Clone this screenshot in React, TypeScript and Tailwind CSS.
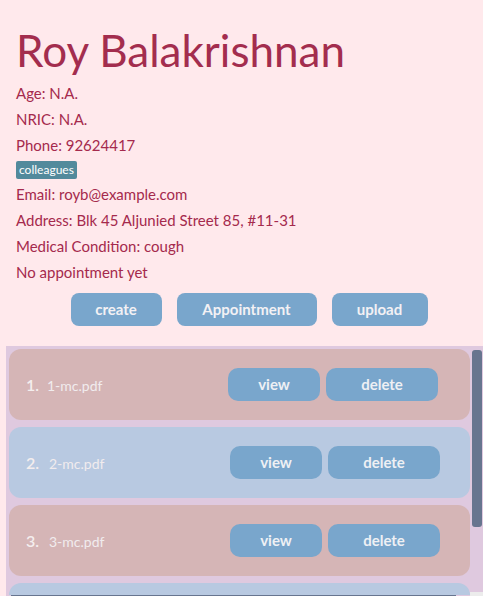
import React from "react";

const files = ["1-mc.pdf", "2-mc.pdf", "3-mc.pdf"];

export default function App() {
  const font = { fontFamily: "Lato, 'Noto Sans', sans-serif" };
  return (
    <div className="w-[483px] h-[596px] overflow-hidden bg-[#ffe9ec] text-[#a52a4d]" style={font}>
      <div className="pl-4 pt-[20px]">
        <h1 className="text-[44px] leading-[60px] font-normal text-[#a32d4e]">Roy Balakrishnan</h1>
        <div className="text-[15px] leading-[26px]">
          <div>Age: N.A.</div>
          <div>NRIC: N.A.</div>
          <div>Phone: 92624417</div>
          <div className="h-[23px] flex items-center">
            <span className="bg-[#528a9c] text-white text-[12px] leading-[18px] px-[3px] rounded-[2px]">colleagues</span>
          </div>
          <div>Email: royb@example.com</div>
          <div>Address: Blk 45 Aljunied Street 85, #11-31</div>
          <div>Medical Condition: cough</div>
          <div>No appointment yet</div>
        </div>
      </div>
      <div className="flex justify-center pl-[15px] gap-[15px] mt-[8px]">
        <button className="w-[91px] h-[33px] rounded-[8px] bg-[#79a6cc] text-[#f3f1f4] font-bold text-[15px]">create</button>
        <button className="w-[140px] h-[33px] rounded-[8px] bg-[#79a6cc] text-[#f3f1f4] font-bold text-[15px]">Appointment</button>
        <button className="w-[96px] h-[33px] rounded-[8px] bg-[#79a6cc] text-[#f3f1f4] font-bold text-[15px]">upload</button>
      </div>
      <div className="mt-[20px] ml-[6px] h-[250px] bg-[#dfc9df] flex">
        <div className="flex-1 flex flex-col">
          <div className="flex-1 flex flex-col gap-[7px] pt-[3px] pl-[3px] overflow-hidden">
            {files.map((f, i) => (
              <div
                key={f}
                className={`shrink-0 h-[71px] rounded-[12px] flex items-center pl-[17px] ${i % 2 === 0 ? "bg-[#d5b5b6]" : "bg-[#b8c9e1]"}`}
              >
                <div className="flex items-baseline">
                  <span className={`text-[16px] font-semibold text-[#f4eeee] ${i === 0 ? "w-[13px]" : "w-[15px]"}`}>{i + 1}.</span>
                  <span className="ml-[8px] w-[181px] text-[14px] text-[#f1ecee]">{f}</span>
                </div>
                <button className="w-[92px] h-[33px] rounded-[10px] bg-[#79a6cc] text-[#eef0f4] font-bold text-[15px]">view</button>
                <button className="ml-[6px] w-[112px] h-[33px] rounded-[10px] bg-[#79a6cc] text-[#eef0f4] font-bold text-[15px]">delete</button>
              </div>
            ))}
            <div className="shrink-0 h-[71px] rounded-[12px] bg-[#b8c9e1]"></div>
          </div>
          <div className="h-[1px] shrink-0 pl-[5px]">
            <div className="h-[1px] w-[445px] bg-[#67758f]"></div>
          </div>
        </div>
        <div className="w-[13px] shrink-0 flex flex-col">
          <div className="flex-1 pl-[2px] pr-[1px] pt-[4px]">
            <div className="h-[177px] w-[10px] rounded-[3px] bg-[#67758f]"></div>
          </div>
          <div className="h-[4px] bg-[#ececec]"></div>
        </div>
      </div>
    </div>
  );
}
